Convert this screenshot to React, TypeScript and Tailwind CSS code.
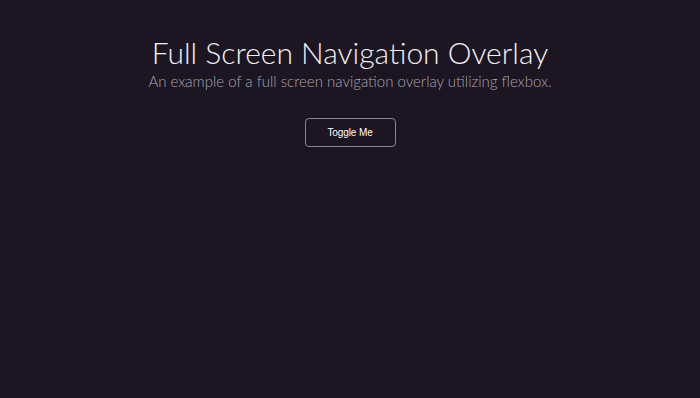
export default function App() {
  return (
    <div className="min-h-[398px] bg-[#1c1522] text-white">
      <div className="flex flex-col items-center pt-[34px]">
        <h1 className="font-['Lato',sans-serif] text-[30px] font-light leading-[36px] text-[#f2f0f3]">
          Full Screen Navigation Overlay
        </h1>
        <p className="mt-[2px] font-['Lato',sans-serif] text-[15px] font-light leading-[18px] text-[#aaa5ae]">
          An example of a full screen navigation overlay utilizing flexbox.
        </p>
        <button className="mt-[28px] h-[29px] w-[91px] rounded-[4px] border border-[#8a8590] font-['Liberation_Sans',sans-serif] text-[10px] tracking-[-0.1px] text-white">
          Toggle Me
        </button>
      </div>
    </div>
  );
}
